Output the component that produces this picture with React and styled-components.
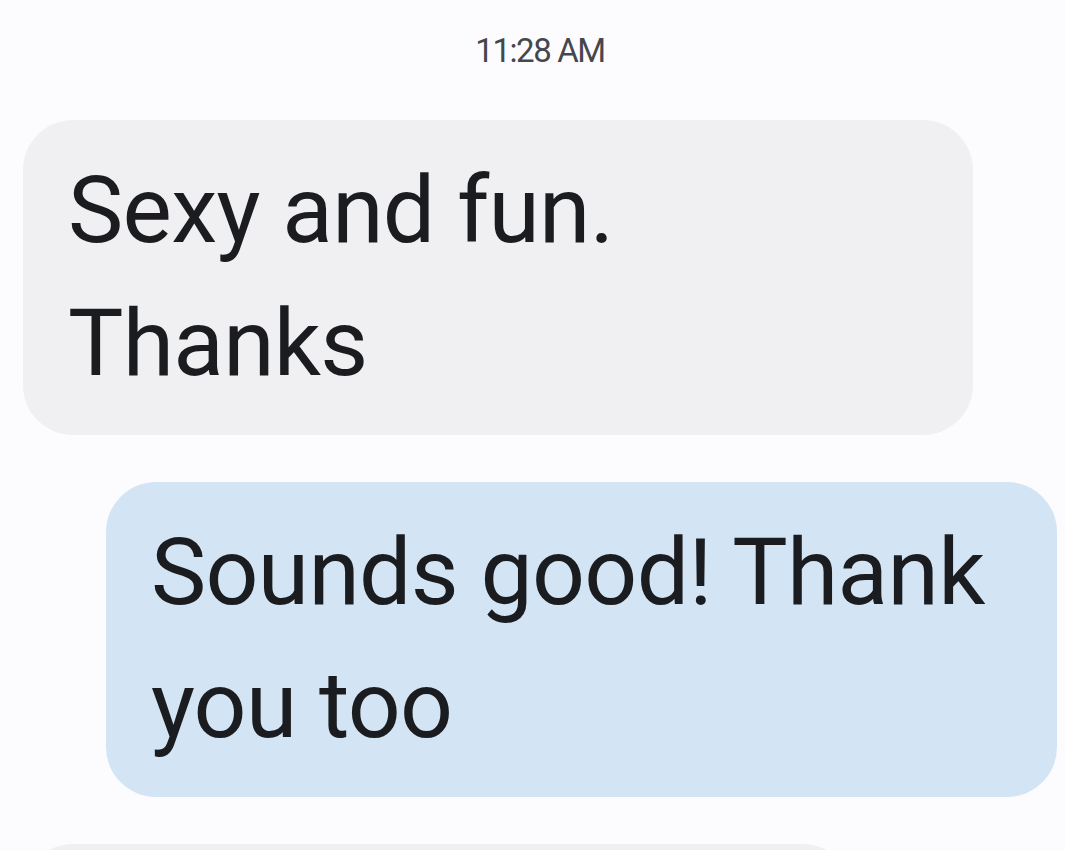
import styled, { createGlobalStyle } from 'styled-components';

// Estilos globales
const GlobalStyle = createGlobalStyle`
  html, body {
    margin: 0;
    padding: 0;
    overflow: hidden;
    background-color: #fcfcfe;
  }
  body {
    font-family: Roboto, "Noto Sans", "Liberation Sans", sans-serif;
    color: #1b1c1f;
  }
`;

const Thread = styled.main`
  display: flex;
  flex-direction: column;
  gap: 47px;
  padding: 31px 8px 0 23px;
`;

const Timestamp = styled.div`
  text-align: center;
  font-size: 33px;
  line-height: 40px;
  letter-spacing: -1.4px;
  color: #45474c;
  margin-bottom: 2px;
`;

const Bubble = styled.div`
  box-sizing: border-box;
  width: ${(p) => p.$width || 951}px;
  min-height: ${(p) => p.$minHeight || 0}px;
  align-self: ${(p) => (p.$outgoing ? 'flex-end' : 'flex-start')};
  background-color: ${(p) => (p.$outgoing ? '#d3e5f4' : '#f0f0f2')};
  border-radius: 50px;
  padding: 24px 44px 25px 45px;
  font-size: 93px;
  line-height: 133px;
  letter-spacing: -0.7px;
  white-space: pre-line;
  color: #1b1c1f;
`;

const messages = [
  { id: 1, text: 'Sexy and fun.\nThanks', outgoing: false, width: 950 },
  { id: 2, text: 'Sounds good! Thank you too', outgoing: true, width: 951 },
  { id: 3, text: '', outgoing: false, width: 830, minHeight: 180 },
];

const App = () => {
  return (
    <>
      <GlobalStyle />
      <Thread>
        <Timestamp>11:28 AM</Timestamp>
        {messages.map((m) => (
          <Bubble
            key={m.id}
            $outgoing={m.outgoing}
            $width={m.width}
            $minHeight={m.minHeight}
          >
            {m.text}
          </Bubble>
        ))}
      </Thread>
    </>
  );
};

export default App;
